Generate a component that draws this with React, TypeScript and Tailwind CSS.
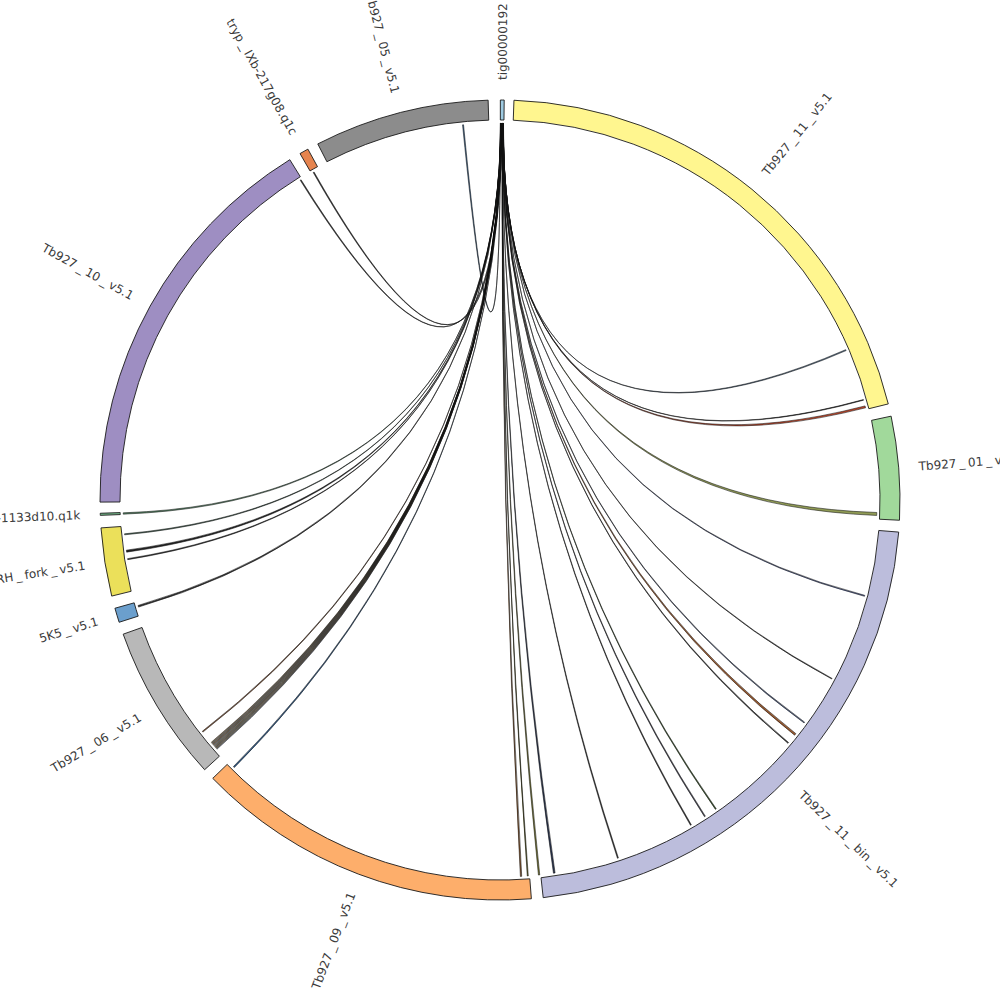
import React, { Fragment } from "react";

const R_IN = 380;
const R_OUT = 400;
const R_CH = 377;

function pt(deg: number, r: number): [number, number] {
  const a = (deg * Math.PI) / 180;
  return [r * Math.sin(a), -r * Math.cos(a)];
}

function arcPath(a0: number, a1: number): string {
  const large = a1 - a0 > 180 ? 1 : 0;
  const [x0, y0] = pt(a0, R_OUT);
  const [x1, y1] = pt(a1, R_OUT);
  const [x2, y2] = pt(a1, R_IN);
  const [x3, y3] = pt(a0, R_IN);
  return `M${x0},${y0}A${R_OUT},${R_OUT} 0 ${large} 1 ${x1},${y1}L${x2},${y2}A${R_IN},${R_IN} 0 ${large} 0 ${x3},${y3}Z`;
}

function ribbon(s0: number, s1: number, t0: number, t1: number): string {
  const r = R_CH;
  const [sx0, sy0] = pt(s0, r);
  const [sx1, sy1] = pt(s1, r);
  const [tx0, ty0] = pt(t0, r);
  const [tx1, ty1] = pt(t1, r);
  return `M${sx0},${sy0}A${r},${r} 0 0 1 ${sx1},${sy1}Q0,0 ${tx0},${ty0}A${r},${r} 0 0 1 ${tx1},${ty1}Q0,0 ${sx0},${sy0}Z`;
}

type Seg = { a0: number; a1: number; color: string; label: string };

const segs: Seg[] = [
  { a0: 0.05, a1: 0.6, color: "#9ecae1", label: "tig00000192" },
  { a0: 2.0, a1: 76.1, color: "#fff68f", label: "Tb927_11_v5.1" },
  { a0: 77.9, a1: 92.9, color: "#a1d99b", label: "Tb927_01_v5.1" },
  { a0: 94.6, a1: 173.8, color: "#bcbddc", label: "Tb927_11_bin_v5.1" },
  { a0: 175.5, a1: 225.9, color: "#fdae6b", label: "Tb927_09_v5.1" },
  { a0: 227.6, a1: 250.4, color: "#b8b8b8", label: "Tb927_06_v5.1" },
  { a0: 252.2, a1: 254.3, color: "#6b9fcd", label: "5K5_v5.1" },
  { a0: 256.1, a1: 266.0, color: "#ebe05a", label: "RH_fork_v5.1" },
  { a0: 267.8, a1: 268.1, color: "#74b98a", label: "tryp_IXb-1133d10.q1k" },
  { a0: 269.7, a1: 328.3, color: "#9e8ec2", label: "Tb927_10_v5.1" },
  { a0: 330.0, a1: 331.3, color: "#e6844f", label: "tryp_IXb-217g08.q1c" },
  { a0: 332.9, a1: 358.3, color: "#8c8c8c", label: "Tb927_05_v5.1" },
];

type Chord = [number, number, string, number?];

const bundleColors = ["#b07a45", "#8f8f4a", "#7a7a7a", "#c0703d", "#7d8f4f", "#8a8ab0"];
const bundle: Chord[] = Array.from({ length: 12 }, (_, i) => {
  const t0 = 229.95 - i * 0.12;
  return [t0, t0 + 0.055, bundleColors[i % bundleColors.length], 0.38];
});

const chordsRaw: Chord[] = [
  [354.3, 354.45, "#3a6a9a"],
  [330.3, 330.45, "#333333"],
  [328.0, 328.15, "#333333"],
  [267.85, 268.05, "#5a8a6a"],
  [264.7, 264.85, "#4a6a5a"],
  [262.05, 262.35, "#222222"],
  [260.9, 261.05, "#333333"],
  [253.5, 253.75, "#333333"],
  [232.0, 232.15, "#8a5a3a"],
  ...bundle,
  [224.8, 225.0, "#2d5a8a"],
  [176.7, 176.9, "#8a5a30"],
  [175.7, 175.85, "#6a6a2a"],
  [173.95, 174.15, "#7a7a30"],
  [171.6, 171.85, "#2a3550"],
  [161.7, 161.85, "#333333"],
  [149.5, 149.65, "#333333"],
  [147.0, 147.15, "#444455"],
  [145.0, 145.15, "#3a5a2a"],
  [130.05, 130.2, "#333333"],
  [128.3, 128.6, "#9a5a30"],
  [126.1, 126.25, "#5a6a90"],
  [118.25, 118.35, "#444444"],
  [104.65, 104.8, "#5b6aa0"],
  [91.9, 92.35, "#8f9a55"],
  [75.55, 75.85, "#b4452b"],
  [74.55, 74.65, "#333333"],
  [66.5, 66.65, "#4f6f8f"],
];

const N = chordsRaw.length;
const step = 0.48 / N;
const chords = chordsRaw.map(([t0, t1, color, sw], i) => {
  const s0 = 0.06 + i * step;
  return { d: ribbon(s0, s0 + step * 0.5, t0, t1), color, sw: sw ?? 0.55 };
});

function Label({ text, angle }: { text: string; angle: number }) {
  const flip = angle > 180;
  const parts = text.split("_");
  return (
    <g transform={`rotate(${angle - 90}) translate(420,0)${flip ? " rotate(180)" : ""}`}>
      <text
        textAnchor={flip ? "end" : "start"}
        dy="4.3"
        fontFamily="'DejaVu Sans', sans-serif"
        fontSize="12"
        fill="#3a3a3a"
      >
        {parts.map((p, i) =>
          i === 0 ? (
            <tspan key={i}>{p}</tspan>
          ) : (
            <Fragment key={i}>
              <tspan dx="2.8">_</tspan>
              <tspan dx="2.8">{p}</tspan>
            </Fragment>
          )
        )}
      </text>
    </g>
  );
}

export default function App() {
  return (
    <div className="w-[1000px] h-[1000px] bg-white overflow-hidden">
      <svg width="1000" height="1000" viewBox="0 0 1000 1000" className="block">
        <g transform="translate(500,500)">
          {segs.map((s, i) => (
            <path key={i} d={arcPath(s.a0, s.a1)} fill={s.color} stroke="#1a1a1a" strokeWidth="0.9" />
          ))}
          {chords.map((c, i) => (
            <path key={i} d={c.d} fill={c.color} stroke="#111111" strokeWidth={c.sw} />
          ))}
          {segs.map((s, i) => (
            <Label key={i} text={s.label} angle={(s.a0 + s.a1) / 2} />
          ))}
        </g>
      </svg>
    </div>
  );
}
